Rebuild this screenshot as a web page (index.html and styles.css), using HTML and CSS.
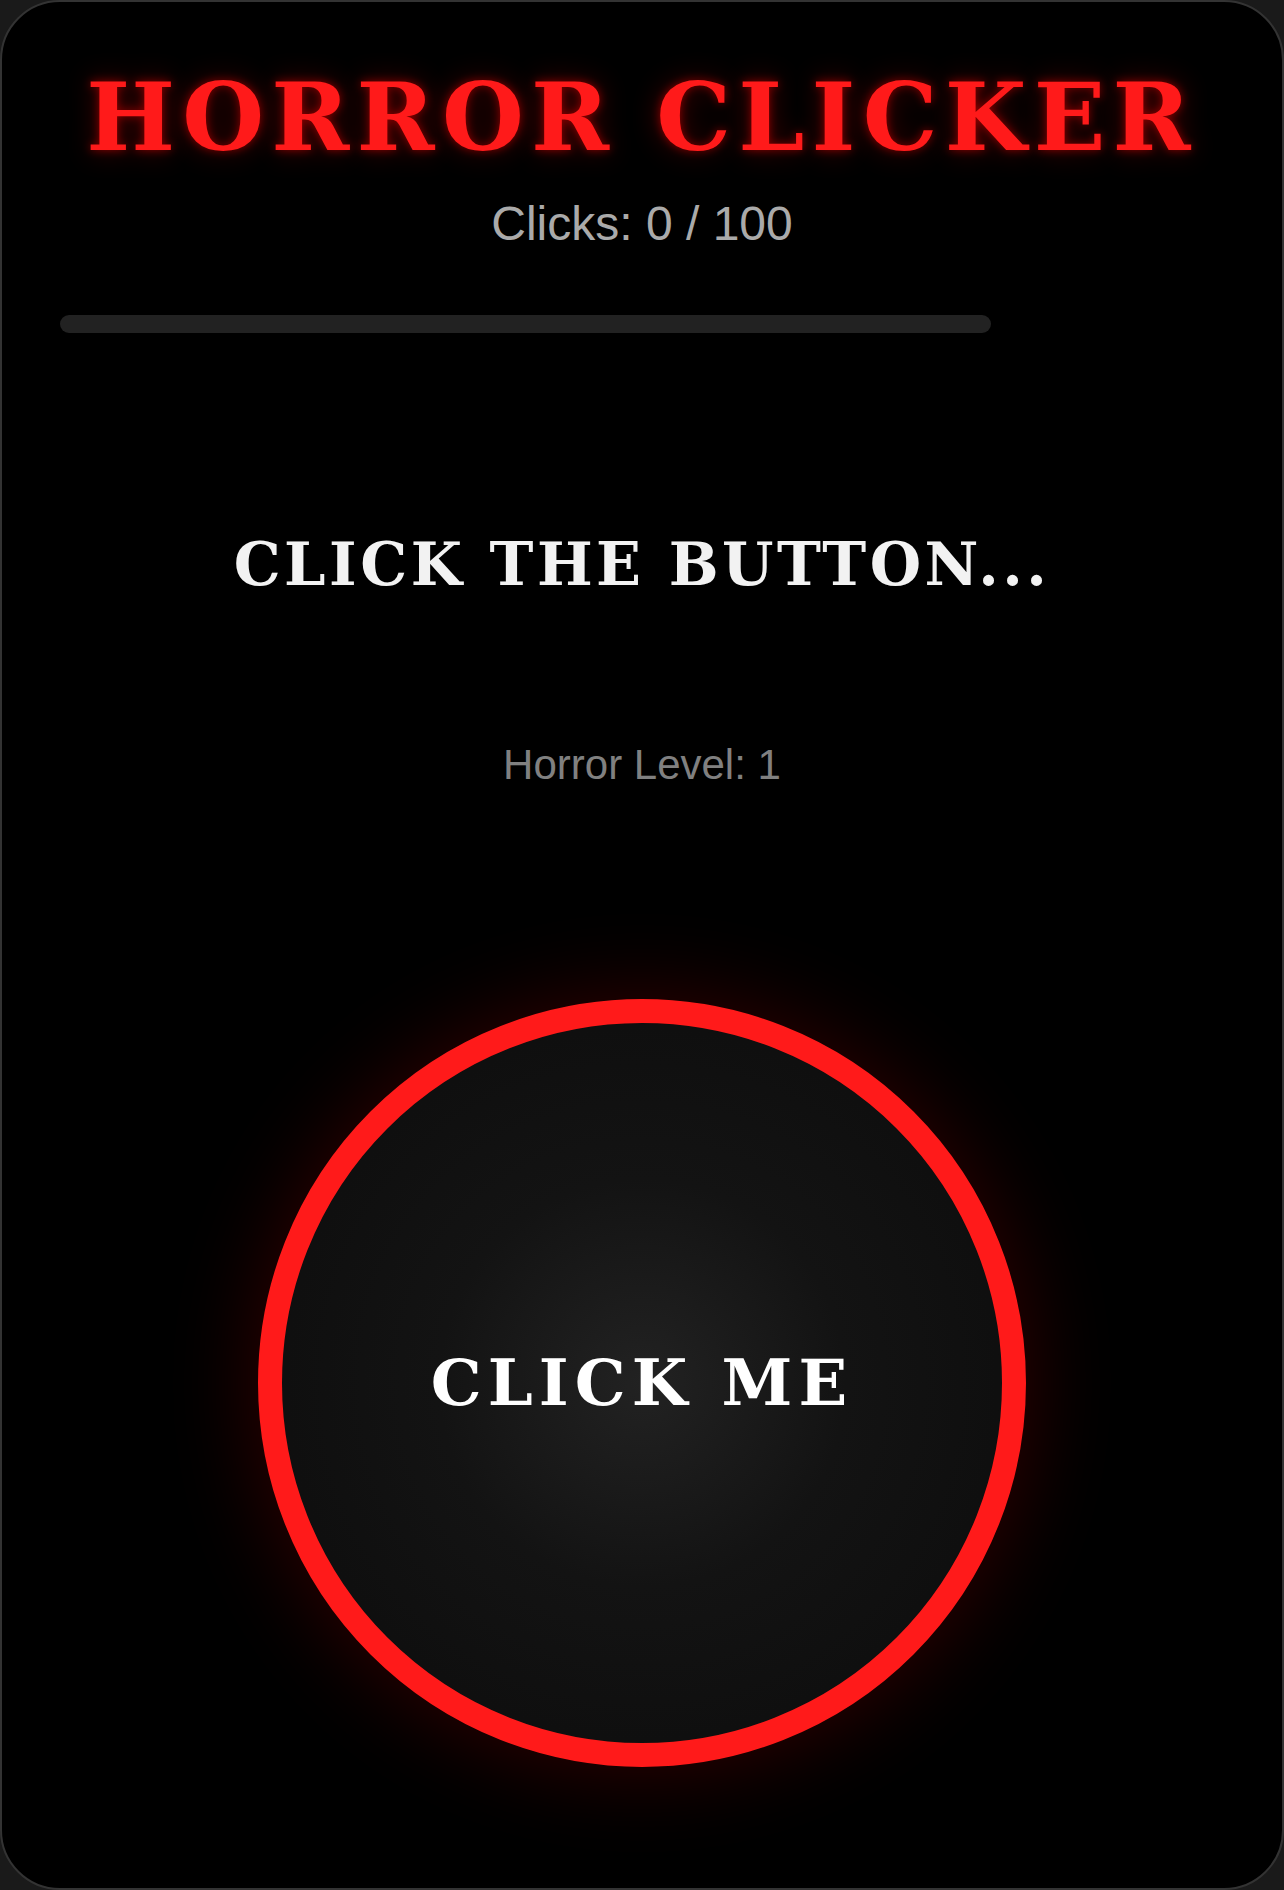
FILE: index.html
```html
<!DOCTYPE html>
<html lang="en">
<head>
<meta charset="utf-8">
<title>Horror Clicker</title>
<link rel="stylesheet" href="styles.css">
</head>
<body>
<main class="card">
  <h1 class="title">HORROR CLICKER</h1>
  <div class="clicks">Clicks: 0 / 100</div>
  <div class="progress"><div class="progress-fill" style="width:0%"></div></div>
  <h2 class="message">CLICK THE BUTTON...</h2>
  <div class="level">Horror Level: 1</div>
  <button class="big-button" type="button">CLICK ME</button>
</main>
</body>
</html>
```
FILE: styles.css
```css
html, body {
  margin: 0;
  padding: 0;
  background: #1a1a1a;
}
.card {
  box-sizing: border-box;
  width: 1284px;
  height: 1890px;
  border: 2px solid #333;
  border-radius: 60px;
  background: #000;
  padding: 68px 58px 0;
  display: flex;
  flex-direction: column;
  align-items: center;
  overflow: hidden;
}
.title {
  margin: 0;
  font-family: "DejaVu Serif", serif;
  font-weight: bold;
  font-size: 94px;
  line-height: 94px;
  letter-spacing: 7.2px;
  color: #ff1a1a;
  text-shadow: 0 0 10px rgba(255, 0, 0, 0.5), 0 0 28px rgba(255, 0, 0, 0.3);
  white-space: nowrap;
}
.clicks {
  margin-top: 36px;
  font-family: "Liberation Sans", Arial, sans-serif;
  font-size: 48px;
  line-height: 48px;
  color: #aaa;
}
.progress {
  align-self: flex-start;
  margin-top: 67px;
  width: 80%;
  height: 18px;
  border-radius: 9px;
  background: #222;
  overflow: hidden;
}
.progress-fill {
  height: 100%;
  background: #ff1a1a;
}
.message {
  margin: 202px 0 0;
  font-family: "DejaVu Serif", serif;
  font-weight: bold;
  font-size: 59px;
  line-height: 59px;
  letter-spacing: 3.5px;
  color: #f2f2f2;
  white-space: nowrap;
}
.level {
  margin-top: 150px;
  font-family: "Liberation Sans", Arial, sans-serif;
  font-size: 42px;
  line-height: 42px;
  color: #808080;
}
.big-button {
  margin-top: 213px;
  box-sizing: border-box;
  width: 768px;
  height: 768px;
  flex: none;
  border: 24px solid #ff1a1a;
  border-radius: 50%;
  background: radial-gradient(circle at center, #222 0%, #131313 40%, #0b0b0b 100%);
  box-shadow: 0 0 90px rgba(255, 0, 0, 0.2);
  display: flex;
  align-items: center;
  justify-content: center;
  padding: 0;
  font-family: "DejaVu Serif", serif;
  font-weight: bold;
  font-size: 64px;
  line-height: 64px;
  letter-spacing: 6px;
  color: #fff;
  cursor: pointer;
}
```
